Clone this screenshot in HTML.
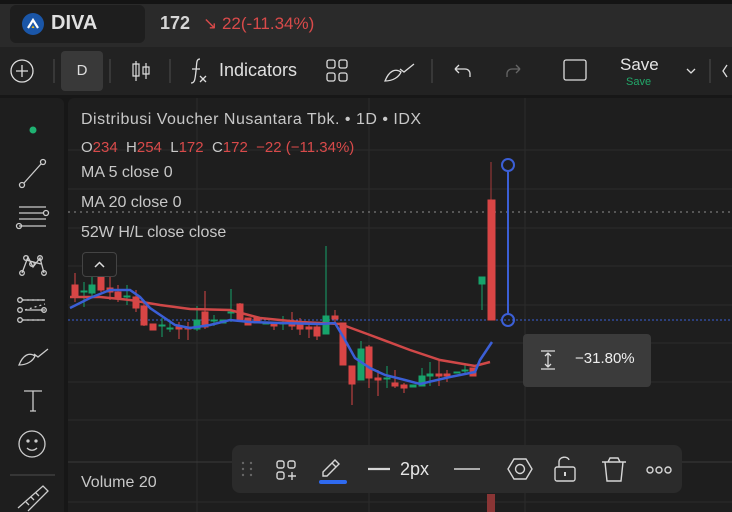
<!DOCTYPE html>
<html><head><meta charset="utf-8"><style>
*{margin:0;padding:0;box-sizing:border-box}
body{width:732px;height:512px;overflow:hidden;background:#171717;font-family:"Liberation Sans","DejaVu Sans",sans-serif;position:relative;color:#ddd}
.a{position:absolute}
</style></head><body>
<div class="a" style="left:0;top:0;width:732px;height:4px;background:#141414"></div>
<div class="a" style="left:0;top:4px;width:732px;height:43px;background:#2a2a2a"></div>
<div class="a" style="left:10px;top:5px;width:135px;height:38px;background:#1e1e1e;border-radius:6px"></div>
<svg class="a" style="left:21px;top:12px" width="24" height="24"><circle cx="12" cy="12" r="11" fill="#1a56a8"/><path d="M7 16 L12 8 L17 16" stroke="#fff" stroke-width="2.2" fill="none"/><path d="M10.5 16 L12 13.5 L13.5 16Z" fill="#f3c21b"/></svg>
<div class="a" style="left:51px;top:12px;font-size:20px;font-weight:bold;color:#e0e0e0">DIVA</div>
<div class="a" style="left:160px;top:13px;font-size:18px;font-weight:bold;color:#d6d6d6">172</div>
<div class="a" style="left:203px;top:14px;font-size:17px;color:#d94a4a">↘ 22(-11.34%)</div>

<div class="a" style="left:0;top:47px;width:732px;height:48px;background:#222"></div>
<svg class="a" style="left:0;top:47px" width="732" height="48" fill="none" stroke="#ddd" stroke-width="1.3">
<circle cx="22" cy="24" r="11"/><path d="M22 18v12M16 24h12"/>
<path d="M54 12v24M110 12v24M170 12v24M432 12v24M710 12v24" stroke="#444"/>
<path d="M136 14v20M136 17h-3v12h6v-12zM146 16v16M143 20h6v7h-6z" stroke-width="1.2"/>
<path d="M200 12c-4 0-3 4-4 12c-1 8-1 12-5 12M192 22h8M200 29l6 6M206 29l-6 6"/>
<rect x="327" y="13" width="8" height="8" rx="2"/><rect x="339" y="13" width="8" height="8" rx="2"/><rect x="327" y="26" width="8" height="8" rx="2"/><rect x="339" y="26" width="8" height="8" rx="2"/>
<path d="M385 34c4-10 10-13 16-9c-2 5-8 9-16 9zM400 22l4 3l10-8" />
<path d="M455 22h10c3 0 5 2 5 5v3M455 22l4-4M455 22l4 4"/>
<path d="M520 22h-8c-3 0-5 2-5 5v3M520 22l-4-4M520 22l-4 4" stroke="#666"/>
<rect x="564" y="13" width="22" height="20" rx="2"/>
<path d="M687 22l4 4l4-4"/>
<path d="M727 18l-4 6l4 6"/>
</svg>
<div class="a" style="left:61px;top:51px;width:42px;height:40px;background:#393939;border-radius:4px;text-align:center;line-height:40px;font-size:15px;color:#ddd">D</div>
<div class="a" style="left:219px;top:60px;font-size:18px;color:#e0e0e0">Indicators</div>
<div class="a" style="left:620px;top:55px;font-size:17px;color:#e6e6e6">Save</div>
<div class="a" style="left:626px;top:76px;font-size:11px;color:#22a86a">Save</div>

<div class="a" style="left:0;top:98px;width:64px;height:414px;background:#1e1e1e;border-radius:0 6px 0 0"></div>
<svg class="a" style="left:0;top:98px" width="64" height="414" fill="none" stroke="#ccc" stroke-width="1.3">
<circle cx="33" cy="32" r="3.5" fill="#1fb272" stroke="none"/>
<circle cx="22" cy="87" r="2.5"/><circle cx="43" cy="64" r="2.5"/><path d="M24 85l17-19"/>
<path d="M19 109h27M19 115h25M19 121h27M19 128h27" /><circle cx="46" cy="115" r="2.5"/><circle cx="19" cy="128" r="2.5"/>
<path d="M22 175l6-16l5 10l7-9l4 15M26 162l15 4" /><circle cx="22" cy="175" r="2.3"/><circle cx="26" cy="160" r="2.3"/><circle cx="40" cy="160" r="2.3"/><circle cx="44" cy="175" r="2.3"/><circle cx="32" cy="166" r="2.3"/>
<path d="M22 202h23M22 222h23M25 212l20-6" stroke-dasharray="2 3"/><path d="M22 202h23M22 222h23M25 212h20"/><circle cx="20" cy="202" r="2.3"/><circle cx="20" cy="212" r="2.3"/><circle cx="20" cy="222" r="2.3"/><circle cx="44" cy="212" r="2.3"/>
<path d="M19 267c4-10 10-13 16-9c-2 5-8 9-16 9zM34 256l4 3l10-8"/>
<path d="M24 293h18M33 293v20M30 313h6"/>
<circle cx="32" cy="346" r="13"/><circle cx="28" cy="343" r="1" fill="#ccc"/><circle cx="36" cy="343" r="1" fill="#ccc"/><path d="M27 350c3 3 7 3 10 0"/>
<path d="M10 377h45" stroke="#444"/>
<path d="M18 410l25-22l5 5l-20 20M26 404l3 3M31 399l3 3M36 395l3 3"/>
</svg>

<div class="a" style="left:68px;top:98px;width:664px;height:414px;background:#1e1e1e;border-radius:6px 0 0 0"></div>
<svg class="a" style="left:68px;top:98px" width="664" height="414">
<g stroke="#2c2c2c" stroke-width="1">
<path d="M0 52h664M0 91h664M0 130h664M0 168h664M0 207h664M0 245h664M0 284h664M0 322h664M0 404h664M129 0v414M301 0v414M457 0v414"/>
</g>
<path d="M0 364h664" stroke="#3a3a3a"/>
<path d="M0 114h664" stroke="#777" stroke-dasharray="2 4" stroke-width="1.3"/>
<path d="M0 222h664" stroke="#3860d8" stroke-dasharray="2 2" stroke-width="1"/>
</svg>
<svg class="a" style="left:0;top:0" width="732" height="512">
<g stroke-width="1">
<g fill="#d84545" stroke="#d84545">
<line x1="75" y1="273" x2="75" y2="302"/><rect x="72" y="285" width="6" height="12"/>
<line x1="101" y1="272" x2="101" y2="292"/><rect x="98" y="277" width="6" height="13"/>
<line x1="110" y1="272" x2="110" y2="300"/><rect x="107" y="288" width="6" height="4"/>
<line x1="118" y1="285" x2="118" y2="302"/><rect x="115" y="292" width="6" height="6"/>
<line x1="136" y1="290" x2="136" y2="312"/><rect x="133" y="297" width="6" height="11"/>
<line x1="144" y1="300" x2="144" y2="326"/><rect x="141" y="306" width="6" height="19"/>
<rect x="150" y="324" width="6" height="6"/>
<line x1="179" y1="322" x2="179" y2="339"/><rect x="176" y="327" width="6" height="2"/>
<line x1="188" y1="322" x2="188" y2="340"/><rect x="185" y="327" width="6" height="2"/>
<line x1="205" y1="291" x2="205" y2="329"/><rect x="202" y="312" width="6" height="15"/>
<line x1="240" y1="303" x2="240" y2="322"/><rect x="237" y="304" width="6" height="16"/>
<rect x="245" y="318" width="6" height="7"/><rect x="254" y="318" width="6" height="5"/>
<line x1="274" y1="322" x2="274" y2="330"/><rect x="271" y="324" width="6" height="2"/>
<line x1="292" y1="312" x2="292" y2="330"/><rect x="289" y="322" width="6" height="4"/>
<line x1="300" y1="318" x2="300" y2="335"/><rect x="297" y="323" width="6" height="6"/>
<line x1="309" y1="322" x2="309" y2="338"/><rect x="306" y="327" width="6" height="2"/>
<line x1="317" y1="322" x2="317" y2="340"/><rect x="314" y="327" width="6" height="9"/>
<line x1="335" y1="310" x2="335" y2="322"/><rect x="332" y="316" width="6" height="3"/>
<rect x="340" y="323" width="6" height="42"/>
<line x1="352" y1="366" x2="352" y2="405"/><rect x="349" y="366" width="6" height="18"/>
<line x1="369" y1="345" x2="369" y2="388"/><rect x="366" y="347" width="6" height="31"/>
<line x1="378" y1="370" x2="378" y2="396"/><rect x="375" y="378" width="6" height="2"/>
<line x1="395" y1="370" x2="395" y2="388"/><rect x="392" y="383" width="6" height="3"/>
<line x1="404" y1="383" x2="404" y2="393"/><rect x="401" y="385" width="6" height="3"/>
<line x1="439" y1="360" x2="439" y2="386"/><rect x="436" y="374" width="6" height="2"/>
<line x1="447" y1="370" x2="447" y2="382"/><rect x="444" y="374" width="6" height="2"/>
<rect x="470" y="368" width="6" height="8"/>
<line x1="491" y1="162" x2="491" y2="320" stroke="#a83a3a"/><rect x="488" y="200" width="7" height="120"/>
<rect x="487" y="494" width="8" height="18" fill="#8a3535" stroke="none"/>
</g>
<g fill="#17a36b" stroke="#17a36b">
<line x1="84" y1="282" x2="84" y2="307"/><rect x="81" y="291" width="6" height="1"/>
<line x1="92" y1="277" x2="92" y2="298"/><rect x="89" y="285" width="6" height="8"/>
<line x1="127" y1="285" x2="127" y2="305"/><rect x="124" y="296" width="6" height="1"/>
<line x1="162" y1="318" x2="162" y2="337"/><rect x="159" y="325" width="6" height="1"/>
<line x1="170" y1="320" x2="170" y2="332"/><rect x="167" y="328" width="6" height="1"/>
<line x1="197" y1="306" x2="197" y2="331"/><rect x="194" y="320" width="6" height="9"/>
<line x1="214" y1="315" x2="214" y2="326"/><rect x="211" y="320" width="6" height="1"/>
<rect x="220" y="320" width="6" height="3"/>
<line x1="231" y1="289" x2="231" y2="322"/><rect x="228" y="312" width="6" height="1"/>
<rect x="263" y="322" width="6" height="2"/>
<line x1="283" y1="316" x2="283" y2="330"/><rect x="280" y="323" width="6" height="1"/>
<line x1="326" y1="246" x2="326" y2="334"/><rect x="323" y="316" width="6" height="18"/>
<line x1="361" y1="341" x2="361" y2="380"/><rect x="358" y="349" width="6" height="31"/>
<line x1="387" y1="366" x2="387" y2="388"/><rect x="384" y="378" width="6" height="1"/>
<rect x="410" y="385" width="6" height="2"/>
<line x1="422" y1="368" x2="422" y2="386"/><rect x="419" y="376" width="6" height="10"/>
<line x1="430" y1="362" x2="430" y2="386"/><rect x="427" y="374" width="6" height="2"/>
<rect x="454" y="372" width="6" height="1"/>
<line x1="465" y1="365" x2="465" y2="375"/><rect x="462" y="370" width="6" height="1"/>
<line x1="482" y1="278" x2="482" y2="310"/><rect x="479" y="277" width="6" height="7"/>
</g>
</g>
<polyline fill="none" stroke="#d04848" stroke-width="2.5" points="70,297 100,297 130,300 160,305 190,309 230,310 260,318 300,322 340,324 370,335 410,350 440,360 475,366 490,362"/>
<polyline fill="none" stroke="#3b5fd6" stroke-width="2.5" points="70,308 90,298 110,290 130,290 140,297 150,308 175,325 190,328 210,325 230,320 250,322 280,323 320,324 335,323 345,340 355,358 370,368 385,375 405,380 420,384 450,377 475,372 480,360 492,342"/>
<line x1="508" y1="170" x2="508" y2="314" stroke="#3b5fd6" stroke-width="2"/>
<circle cx="508" cy="165" r="6" fill="none" stroke="#3b5fd6" stroke-width="2"/>
<circle cx="508" cy="320" r="6" fill="none" stroke="#3b5fd6" stroke-width="2"/>
</svg>

<div class="a" style="left:81px;top:111px;font-size:16px;letter-spacing:0.5px;color:#c8c8c8">Distribusi Voucher Nusantara Tbk. • 1D • IDX</div>
<div class="a" style="left:81px;top:139px;font-size:15px;color:#c8c8c8">O<span style="color:#d84a4a">234</span>&nbsp; H<span style="color:#d84a4a">254</span>&nbsp; L<span style="color:#d84a4a">172</span>&nbsp; C<span style="color:#d84a4a">172</span>&nbsp; <span style="color:#d84a4a">−22 (−11.34%)</span></div>
<div class="a" style="left:81px;top:164px;font-size:16px;color:#c8c8c8">MA 5 close 0</div>
<div class="a" style="left:81px;top:194px;font-size:16px;color:#c8c8c8">MA 20 close 0</div>
<div class="a" style="left:81px;top:224px;font-size:16px;color:#c8c8c8">52W H/L close close</div>
<div class="a" style="left:82px;top:252px;width:35px;height:25px;border:1px solid #444;border-radius:4px;background:#1e1e1e"></div>
<svg class="a" style="left:82px;top:252px" width="35" height="25"><path d="M13 15l4.5-4.5l4.5 4.5" stroke="#ddd" stroke-width="1.5" fill="none"/></svg>
<div class="a" style="left:523px;top:334px;width:128px;height:53px;background:#3b3b3b;border-radius:4px"></div>
<svg class="a" style="left:538px;top:349px" width="20" height="22" fill="none" stroke="#ddd" stroke-width="1.3"><path d="M3 2h14M3 20h14M10 4v14M7 7l3-3l3 3M7 15l3 3l3-3"/></svg>
<div class="a" style="left:575px;top:350px;font-size:15px;color:#eee">−31.80%</div>
<div class="a" style="left:81px;top:474px;font-size:16px;color:#c8c8c8">Volume 20</div>

<div class="a" style="left:232px;top:445px;width:450px;height:48px;background:#2b2b2b;border-radius:8px"></div>
<svg class="a" style="left:232px;top:445px" width="450" height="48" fill="none" stroke="#d6d6d6" stroke-width="1.4">
<g fill="#666" stroke="none"><circle cx="11" cy="18" r="1.2"/><circle cx="19" cy="18" r="1.2"/><circle cx="11" cy="24" r="1.2"/><circle cx="19" cy="24" r="1.2"/><circle cx="11" cy="30" r="1.2"/><circle cx="19" cy="30" r="1.2"/></g>
<rect x="45" y="16" width="7" height="7" rx="2"/><rect x="56" y="16" width="7" height="7" rx="2"/><rect x="45" y="27" width="7" height="7" rx="2"/><path d="M56 31h8M60 27v8"/>
<path d="M91 27l12-12l4 4l-12 12h-4z M100 18l4 4"/>
<rect x="87" y="35" width="28" height="4" rx="2" fill="#2f6af0" stroke="none"/>
<path d="M136 24h22" stroke-width="2.2"/>
<path d="M222 24h26"/>
<path d="M276 24l6-10h12l6 10l-6 10h-12z"/><circle cx="288" cy="24" r="4.5"/>
<rect x="323" y="22" width="20" height="14" rx="2"/><path d="M327 22v-5c0-6 9-6 10-2"/><path d="M333 27v4" stroke-width="2"/>
<path d="M370 17h24M376 17l2-4h8l2 4M373 17l2 19h14l2-19"/>
<circle cx="418" cy="25" r="3"/><circle cx="427" cy="25" r="3"/><circle cx="436" cy="25" r="3"/>
</svg>
<div class="a" style="left:400px;top:459px;font-size:18px;color:#e6e6e6">2px</div>
</body></html>
